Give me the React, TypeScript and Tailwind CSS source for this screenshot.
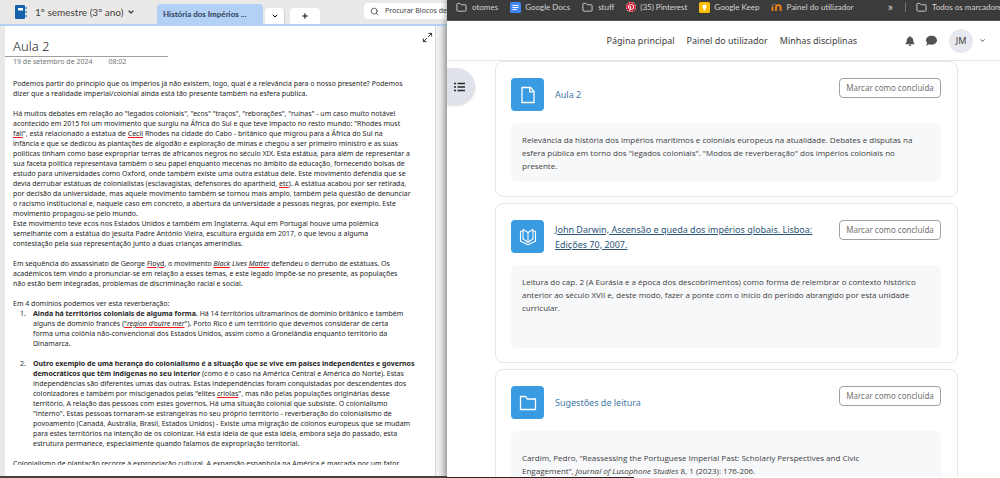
import React from 'react';
import { ChevronDown, Folder, Maximize2, Plus, Search } from 'lucide-react';
import { FaBell, FaComment, FaPinterest } from 'react-icons/fa';

interface Activity {
  id: string;
  titleLines: string[];
  underlined?: boolean;
  icon: React.ReactNode;
  bodyClass: string;
  body: React.ReactNode[];
}

const Misspelt: React.FC<{ children: React.ReactNode }> = ({ children }) => (
  <span className="underline decoration-[#ff1a1a] decoration-1 underline-offset-1">{children}</span>
);

const Lines: React.FC<{ lines: React.ReactNode[] }> = ({ lines }) => (
  <>
    {lines.map((line, i) => (
      <span key={i} className="block whitespace-nowrap">{line}</span>
    ))}
  </>
);

const PARAGRAPHS: React.ReactNode[][] = [
  [
    'Podemos partir do princípio que os impérios já não existem, logo, qual é a relevância para o nosso presente? Podemos',
    'dizer que a realidade imperial/colonial ainda está tão presente também na esfera publica.',
  ],
  [
    'Há muitos debates em relação ao "legados coloniais", "ecos" "traços", "reborações", "ruínas" - um caso muito notável',
    'acontecido em 2015 foi um movimento que surgiu na África do Sul e que teve impacto no resto mundo: "Rhodes must',
    <><Misspelt>fall</Misspelt>", está relacionado a estatua de <Misspelt>Cecil</Misspelt> Rhodes na cidade do Cabo - britânico que migrou para a África do Sul na</>,
    'infância e que se dedicou às plantações de algodão e exploração de minas e chegou a ser primeiro ministro e as suas',
    'politicas tinham como base expropriar terras de africanos negros no século XIX. Esta estátua, para além de representar a',
    'sua faceta política representava também o seu papel enquanto mecenas no âmbito da educação, fornecendo bolsas de',
    'estudo para universidades como Oxford, onde também existe uma outra estátua dele. Este movimento defendia que se',
    <>devia derrubar estátuas de colonialistas (esclavagistas, defensores do apartheid, <Misspelt>etc</Misspelt>). A estátua acabou por ser retirada,</>,
    'por decisão da universidade, mas aquele movimento também se tornou mais amplo, também pela questão de denunciar',
    'o racismo institucional e, naquele caso em concreto, a abertura da universidade a pessoas negras, por exemplo. Este',
    'movimento propagou-se pelo mundo.',
    'Este movimento teve ecos nos Estados Unidos e também em Inglaterra. Aqui em Portugal houve uma polémica',
    'semelhante com a estátua do jesuíta Padre António Vieira, escultura erguida em 2017, o que levou a alguma',
    'contestação pela sua representação junto a duas crianças ameríndias.',
  ],
  [
    <>Em sequência do assassinato de George <Misspelt>Floyd</Misspelt>, o movimento <em><Misspelt>Black</Misspelt> Lives <Misspelt>Matter</Misspelt></em> defendeu o derrubo de estátuas. Os</>,
    'académicos tem vindo a pronunciar-se em relação a esses temas, e este legado impõe-se no presente, as populações',
    'não estão bem integradas, problemas de discriminação racial e social.',
  ],
];

const DOMAINS: React.ReactNode[][] = [
  [
    <><b>Ainda há territórios coloniais de alguma forma.</b> Há 14 territórios ultramarinos de domínio britânico e também</>,
    <>alguns de domínio francês (<Misspelt>"<em>region d'outre mer</em></Misspelt>"). Porto Rico é um território que devemos considerar de certa</>,
    'forma uma colónia não-convencional dos Estados Unidos, assim como a Gronelândia enquanto território da',
    'Dinamarca.',
  ],
  [
    <b>Outro exemplo de uma herança do colonialismo é a situação que se vive em países independentes e governos</b>,
    <><b>democráticos que têm indígenas no seu interior</b> (como é o caso na América Central e América do Norte). Estas</>,
    'independências são diferentes umas das outras. Estas independências foram conquistadas por descendentes dos',
    <>colonizadores e também por miscigenados pelas "elites <Misspelt>criolas</Misspelt>", mas não pelas populações originárias desse</>,
    'território. A relação das pessoas com estes governos. Há uma situação colonial que subsiste. O colonialismo',
    '"interno". Estas pessoas tornaram-se estrangeiras no seu próprio território - reverberação do colonialismo de',
    'povoamento (Canadá, Austrália, Brasil, Estados Unidos) - Existe uma migração de colonos europeus que se mudam',
    'para estes territórios na intenção de os colonizar. Há esta ideia de que esta ideia, embora seja do passado, esta',
    'estrutura permanece, especialmente quando falamos de expropriação territorial.',
  ],
];

const PageIcon = () => (
  <svg viewBox="0 0 16 18" className="w-4 h-[18px]" fill="none" stroke="currentColor" strokeWidth="1.3">
    <path d="M2 1.5h8.5L14 5.2v11.3H2z" />
    <path d="M9.8 1.8v4.1h4" />
  </svg>
);

const BookIcon = () => (
  <svg viewBox="0 0 18 18" className="w-[18px] h-[18px]" fill="none" stroke="currentColor" strokeWidth="1.1" strokeLinejoin="round">
    <path d="M4 1.500 9 4.500l5-3v9.500l-5 3.200-5-3.200z" />
    <path d="M9 4.500v9.700" />
    <path d="M4 3.200H1.500v10L9 16.800l7.500-3.600v-10H14" />
  </svg>
);

const FolderIcon = () => (
  <svg viewBox="0 0 18 16" className="w-[18px] h-4" fill="none" stroke="currentColor" strokeWidth="1.3">
    <path d="M1.500 14.500v-13h5.200l1.700 2.500h8.100v10.500z" />
  </svg>
);

const ACTIVITIES: Activity[] = [
  {
    id: 'aula-2',
    titleLines: ['Aula 2'],
    icon: <PageIcon />,
    bodyClass: 'pt-[10px] pb-[10px]',
    body: [
      'Relevância da história dos impérios marítimos e coloniais europeus na atualidade. Debates e disputas na',
      'esfera pública em torno dos "legados coloniais". "Modos de reverberação" dos impérios coloniais no',
      'presente.',
    ],
  },
  {
    id: 'john-darwin',
    titleLines: ['John Darwin, Ascensão e queda dos impérios globais. Lisboa:', 'Edições 70, 2007.'],
    underlined: true,
    icon: <BookIcon />,
    bodyClass: 'pt-[10px] pb-[34px]',
    body: [
      'Leitura do cap. 2 (A Eurásia e a época dos descobrimentos) como forma de relembrar o contexto histórico',
      'anterior ao século XVII e, deste modo, fazer a ponte com o início do período abrangido por esta unidade',
      'curricular.',
    ],
  },
  {
    id: 'sugestoes',
    titleLines: ['Sugestões de leitura'],
    icon: <FolderIcon />,
    bodyClass: 'pt-5 pb-[34px]',
    body: [
      'Cardim, Pedro, “Reassessing the Portuguese Imperial Past: Scholarly Perspectives and Civic',
      <>Engagement”, <em>Journal of Lusophone Studies</em> 8, 1 (2023): 176-206.</>,
    ],
  },
];

const NotebookHeader = () => (
  <header className="h-[26px] shrink-0 flex items-end pl-[14px] bg-[#ebe9e8] border-b-2 border-[#b3d1f5] overflow-hidden">
    <button className="h-full shrink-0 flex items-center gap-2 w-[143px] text-[10px] text-neutral-700 whitespace-nowrap font-['Lato','Liberation_Sans',sans-serif]">
      <svg viewBox="0 0 13 14" className="w-[13px] h-[14px] shrink-0">
        <rect x="1" y="0" width="10" height="14" rx="1" fill="#1463a8" />
        <rect x="4" y="3" width="5" height="2.500" fill="#fff" />
        <path d="M12 2v2M12 6v2M12 10v2" stroke="#4c8cc4" strokeWidth="1.500" />
      </svg>
      <span className="flex items-center gap-1">
        1º semestre (3º ano)
        <ChevronDown className="w-2 h-2" strokeWidth={4} />
      </span>
    </button>
    <button className="h-5 w-[106px] shrink-0 px-[6px] rounded-t bg-[#b3d1f5] text-[8px] font-bold text-slate-700 whitespace-nowrap text-left font-['Lato','Liberation_Sans',sans-serif]">
      História dos Impérios ...
    </button>
    <button aria-label="Mais secções" className="ml-[2px] h-4 w-5 shrink-0 rounded-t bg-white border-r border-neutral-300 flex items-center justify-center">
      <ChevronDown className="w-2 h-2" strokeWidth={3} />
    </button>
    <button aria-label="Nova secção" className="ml-[5px] h-4 w-[30px] shrink-0 rounded-t bg-white flex items-center justify-center">
      <Plus className="w-2 h-2" strokeWidth={3} />
    </button>
    <label className="ml-auto mb-[5px] h-4 w-[83px] shrink-0 rounded-l bg-white flex items-center gap-[6px] pl-[6px]">
      <Search className="w-[9px] h-[9px] shrink-0 text-neutral-700" />
      <input
        aria-label="Procurar Blocos de Notas"
        placeholder="Procurar Blocos de"
        className="w-full min-w-0 text-[7px] outline-none placeholder:text-neutral-700"
      />
    </label>
  </header>
);

const Notebook = () => (
  <section className="w-[44.7%] shrink-0 flex flex-col bg-[#ebe9e8] font-['Noto_Sans','Open_Sans',sans-serif]">
    <NotebookHeader />
    <div className="flex-1 min-h-0 flex pl-[5px]">
      <article className="relative flex-1 min-w-0 flex flex-col bg-white pl-2 text-[7px] leading-[10px] text-neutral-800">
        <button aria-label="Expandir página" className="absolute right-0 top-1 p-[2px]">
          <Maximize2 className="w-[11px] h-[11px]" />
        </button>
        <h1 className="-ml-2 pl-2 w-[163px] pt-[10px] border-b border-neutral-400 text-[13px] leading-5 font-light">Aula 2</h1>
        <p className="flex gap-4 text-neutral-500">
          <span>19 de setembro de 2024</span>
          <span>08:02</span>
        </p>
        <div className="mt-3 flex-1 min-h-0 overflow-hidden">
          {PARAGRAPHS.map((lines, i) => (
            <p key={i} className="mb-[10px]"><Lines lines={lines} /></p>
          ))}
          <p className="whitespace-nowrap">Em 4 domínios podemos ver esta reverberação:</p>
          <ol className="pl-[7px] space-y-[10px]">
            {DOMAINS.map((lines, i) => (
              <li key={i} className="flex">
                <span className="w-[13px] shrink-0">{i + 1}.</span>
                <div><Lines lines={lines} /></div>
              </li>
            ))}
          </ol>
          <p className="mt-[10px] h-[6px] overflow-hidden whitespace-nowrap">
            Colonialismo de plantação recorre à expropriação cultural. A expansão espanhola na América é marcada por um fator
          </p>
        </div>
      </article>
      <div className="w-3 shrink-0 border-l border-neutral-300 bg-gradient-to-r from-neutral-100 to-neutral-300" />
    </div>
    <div className="h-[2px] shrink-0 bg-[#4a4240]" />
  </section>
);

const BookmarksBar = () => (
  <nav className="h-[21px] shrink-0 pb-[6px] flex items-center bg-[#3b3b3b] border-b border-neutral-600 font-['Lato','Noto_Sans',sans-serif] text-[8px] leading-3 text-neutral-300 whitespace-nowrap overflow-hidden">
    <a href="#otomes" className="ml-[9px] flex items-center gap-[5px]"><Folder className="w-[11px] h-[11px]" />otomes</a>
    <a href="#docs" className="ml-3 flex items-center gap-1">
      <svg viewBox="0 0 11 11" className="w-[11px] h-[11px]">
        <rect width="11" height="11" rx="1.500" fill="#4285f4" />
        <path d="M2.500 3.500h6M2.500 5.500h6M2.500 7.500h4" stroke="#fff" />
      </svg>
      Google Docs
    </a>
    <a href="#stuff" className="ml-3 flex items-center gap-[5px]"><Folder className="w-[11px] h-[11px]" />stuff</a>
    <a href="#pinterest" className="ml-3 flex items-center gap-1"><FaPinterest className="w-[10px] h-[10px] rounded-full bg-white text-[#d5122c]" />(35) Pinterest</a>
    <a href="#keep" className="ml-3 flex items-center gap-1">
      <svg viewBox="0 0 11 11" className="w-[11px] h-[11px]">
        <rect width="11" height="11" rx="1.500" fill="#fbbc04" />
        <circle cx="5.500" cy="4.700" r="2.200" fill="#fff" />
        <rect x="4.500" y="7.200" width="2" height="1.300" fill="#fff" />
      </svg>
      Google Keep
    </a>
    <a href="#painel" className="ml-3 flex items-center gap-1">
      <svg viewBox="0 0 11 8" className="w-[11px] h-2" fill="none" stroke="#f98012" strokeWidth="1.800">
        <path d="M1.500 3.500V8M5 8V4.500a2.200 2.200 0 0 1 4.600 0V8" />
        <path d="M.5 2.500 5 1" stroke="#777" strokeWidth="1" />
      </svg>
      Painel do utilizador
    </a>
    <button aria-label="Mais marcadores" className="ml-auto text-[12px]">»</button>
    <span className="ml-3 h-[10px] border-l border-neutral-500" />
    <a href="#todos" className="ml-[10px] w-[84px] shrink-0 flex items-center gap-[5px]"><Folder className="w-[11px] h-[11px] shrink-0" />Todos os marcadores</a>
  </nav>
);

const SiteNav = () => (
  <nav className="h-10 shrink-0 flex items-center justify-end pr-[14px] border-b border-neutral-200 text-[9px] text-neutral-700 whitespace-nowrap">
    <div className="flex gap-3">
      <a href="#principal">Página principal</a>
      <a href="#painel-utilizador">Painel do utilizador</a>
      <a href="#disciplinas">Minhas disciplinas</a>
    </div>
    <button aria-label="Notificações" className="ml-12"><FaBell className="w-[10px] h-[10px] text-neutral-600" /></button>
    <button aria-label="Mensagens" className="ml-[11px]"><FaComment className="w-[11px] h-[11px] text-neutral-600" /></button>
    <button className="ml-3 flex items-center gap-[6px]">
      <span className="w-6 h-6 rounded-full bg-[#e6e9ed] flex items-center justify-center">JM</span>
      <ChevronDown className="w-[7px] h-[7px]" strokeWidth={3} />
    </button>
  </nav>
);

const ActivityCard: React.FC<{ activity: Activity }> = ({ activity }) => (
  <li className="border border-neutral-200 rounded-lg pl-[15px] pr-4 pt-4 pb-[14px]">
    <div className="flex items-start">
      <span className="w-[33px] h-[33px] shrink-0 rounded-sm bg-[#399be2] text-white flex items-center justify-center">
        {activity.icon}
      </span>
      <a
        href={`#${activity.id}`}
        className={`ml-[11px] min-h-[33px] flex flex-col justify-center text-[9px] leading-[15px] ${activity.underlined ? 'underline text-[#2c5578]' : 'text-[#3f78a8]'}`}
      >
        <Lines lines={activity.titleLines} />
      </a>
      <button className="ml-auto w-[102px] h-5 shrink-0 rounded-sm border border-neutral-400 text-[8px] text-neutral-500 whitespace-nowrap">
        Marcar como concluída
      </button>
    </div>
    <div className={`mt-3 px-[11px] rounded-md bg-[#f7f8fa] font-['Open_Sans','Noto_Sans',sans-serif] text-[8px] leading-[13px] text-neutral-700 ${activity.bodyClass}`}>
      <Lines lines={activity.body} />
    </div>
  </li>
);

const CoursePage = () => (
  <section className="relative flex-1 min-w-0 flex flex-col bg-white shadow-[-2px_0_5px_rgba(0,0,0,0.3)] font-['Noto_Sans','Open_Sans',sans-serif]">
    <BookmarksBar />
    <SiteNav />
    <main className="flex-1 min-h-0 overflow-hidden flex items-start">
      <button aria-label="Abrir índice da disciplina" className="mt-[7px] w-7 h-[37px] shrink-0 rounded-r-full bg-[#dfe2e8] shadow-sm flex items-center pl-[7px] text-neutral-800">
        <svg viewBox="0 0 12 10" className="w-3 h-[10px]" stroke="currentColor" strokeWidth="1.500">
          <path d="M0 1.500h2M0 5h2M0 8.500h2M3.500 1.500H11M3.500 5H11M3.500 8.500H11" />
        </svg>
      </button>
      <ul className="ml-5 mr-[42px] flex-1 min-w-0 flex flex-col gap-[6px]">
        {ACTIVITIES.map((activity) => (
          <ActivityCard key={activity.id} activity={activity} />
        ))}
      </ul>
    </main>
    <div className="h-px w-[187px] shrink-0 bg-[#2b2224]" />
  </section>
);

export default function App() {
  return (
    <div className="h-screen flex overflow-hidden bg-white">
      <Notebook />
      <CoursePage />
    </div>
  );
}
